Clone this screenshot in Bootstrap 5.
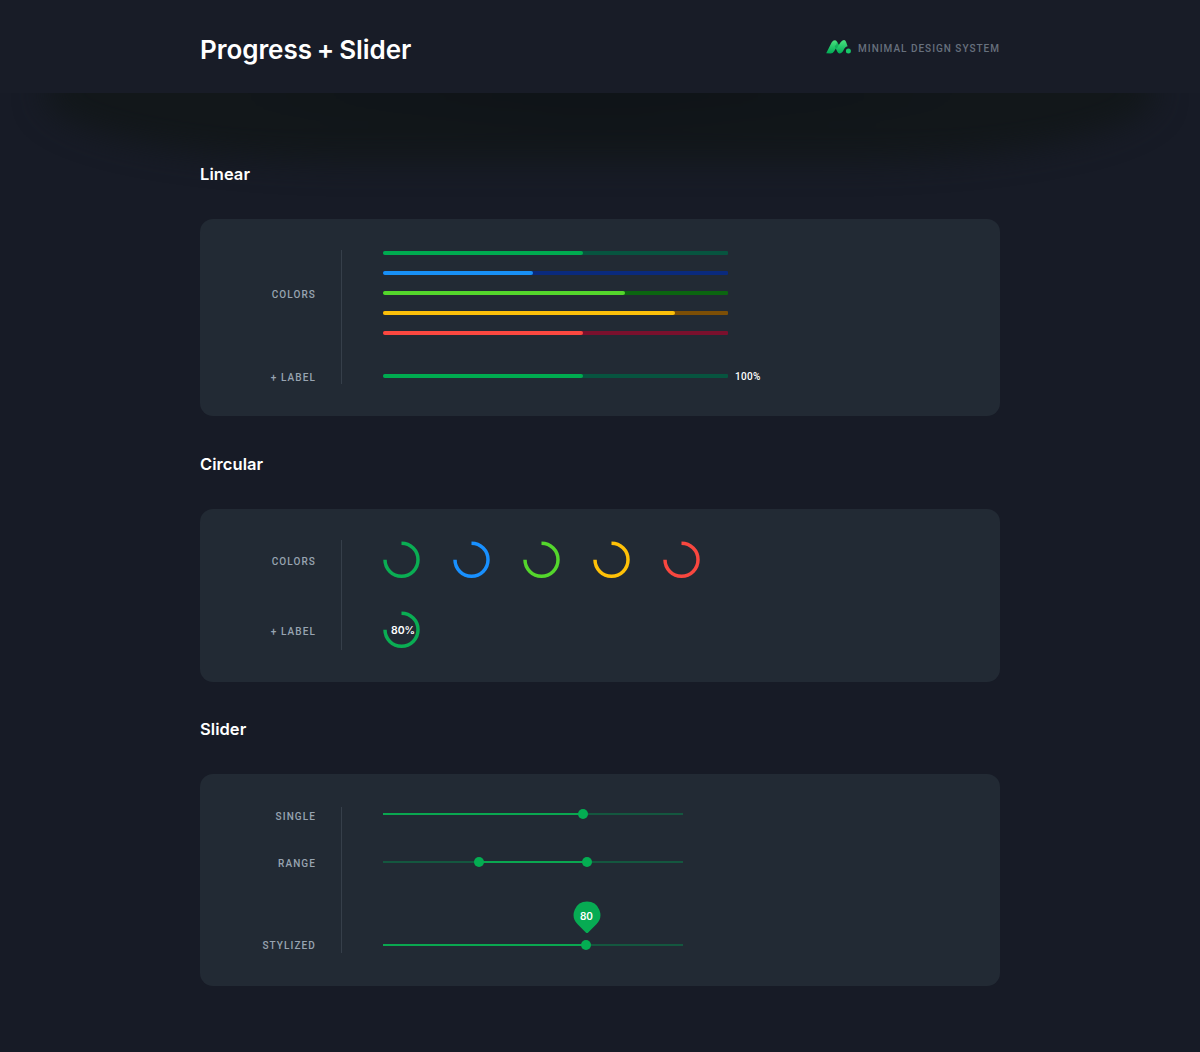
<!DOCTYPE html>
<html lang="en" data-bs-theme="dark">
<head>
<meta charset="utf-8">
<meta name="viewport" content="width=device-width, initial-scale=1">
<title>Progress + Slider</title>
<link href="https://cdn.jsdelivr.net/npm/bootstrap@5.3.0/dist/css/bootstrap.min.css" rel="stylesheet">
<style>
  body { background: #171b26; color: #fff; font-family: Inter, Roboto, sans-serif; min-height: 1052px; }
  .wrap { width: 800px; margin: 0 auto; }
  .top-bar { height: 93px; background: #181c27; padding-top: 8px; }
  .page-title { font: 600 26px/32px Inter, sans-serif; letter-spacing: -.05px; word-spacing: -1.6px; margin: 0; position: relative; top: -1px; }
  .brand { gap: 7px; margin-bottom: 7px; }
  .brand-name { font: 500 10px/12px Roboto, sans-serif; letter-spacing: 1px; color: #67707d; margin-top: 4px; white-space: nowrap; }
  .page-main { padding-top: 69px; position: relative; overflow: hidden; }
  .page-main::before { content: ""; position: absolute; left: 44px; right: 44px; top: -68px; height: 136px; border-radius: 320px / 68px; background: radial-gradient(ellipse 400px 50px at 50% 50%, #0f1317 0, #101519 60%, #12171a 100%); filter: blur(15px); }
  .page-main > .wrap { position: relative; }
  .section-title { font: 600 16.5px/24px Inter, sans-serif; letter-spacing: .05px; margin: 0 0 33px; }
  .panel { background: #222a34; border-radius: 13px; margin-bottom: 35px; padding: 31px 0 32px; }
  .s-bars { margin-bottom: 36px; }
  .labels { width: 116px; }
  .row-label { font: 500 10px/12px Roboto, sans-serif; letter-spacing: 1.1px; color: #98a4b1; text-align: right; }
  .rule { width: 1px; background: #363f4a; margin: 0 41px 0 25px; }
  .h-90 { height: 90px; }
  .bars { gap: 16px; height: 90px; padding-top: 1px; }
  .progress { --bs-progress-height: 4px; width: 345px; border-radius: 1px; }
  .progress-bar { border-radius: 2px; }
  .t-green { background: #07543f; } .f-green { background: #00ab50; }
  .t-blue { background: #0a2a7d; } .f-blue { background: #1890f5; }
  .t-lime { background: #0b6510; } .f-lime { background: #54d62c; }
  .t-amber { background: #7c4e06; } .f-amber { background: #fbbf0a; }
  .t-red { background: #7a102d; } .f-red { background: #fb4840; }
  .bar-row { height: 12px; margin-top: 30px; }
  .pct { font: 500 10px/12px Roboto, sans-serif; letter-spacing: .3px; margin-left: 7px; position: relative; top: 1px; }
  .ring { width: 37px; height: 37px; fill: none; stroke-width: 3.5; display: block; }
  .rings { gap: 33px; }
  .ring-label { font: 600 10.5px/12px Inter, sans-serif; left: 8px; top: 14px; letter-spacing: -.05px; }
  .track { width: 300px; height: 2px; background: #14573f; }
  .track-fill { height: 2px; background: #0aa750; }
  .thumb { width: 10px; height: 10px; border-radius: 50%; background: #04ad52; top: -4px; margin-left: -5px; }
  .pin { width: 28px; height: 33px; margin-left: -14px; top: -43px; }
  .pin-text { font: 600 10px/12px Inter, sans-serif; width: 28px; margin-left: -14px; top: -34px; text-align: center; }
  .s-sliders { padding: 33px 0 33px; }
</style>
</head>
<body>
<header class="top-bar">
  <div class="wrap h-100 d-flex align-items-center justify-content-between">
    <h1 class="page-title">Progress + Slider</h1>
    <div class="brand d-flex align-items-center">
      <svg width="25" height="14" viewBox="0 0 25 14">
        <defs><linearGradient id="leaf" x1="0" y1="0" x2="0" y2="1"><stop offset="0" stop-color="#4be27f"/><stop offset="1" stop-color="#00ab55"/></linearGradient></defs>
        <path d="M.2 13.2 5.6 2.6Q7 .1 9 .2 10.4.4 11.2 2L12.8 5 14.4 2.6Q16 .1 18 .1 19.4.2 20 1.8L21.6 6.2Q19.6 6.4 18.4 8.6L16.8 11.6Q15.6 13.6 13.6 13.4 12 13.2 11.2 11.4L9.8 8.4 8.2 11.2Q6.9 13.4 4.6 13.4Z" fill="url(#leaf)"/>
        <path d="M11.2 2 12.8 5 11 8.2 9.8 8.4 8.6 6Q10.6 5 11.2 2Z" fill="#00a451" opacity=".6"/>
        <circle cx="22.4" cy="11" r="2.5" fill="#17c869"/>
      </svg>
      <span class="brand-name">MINIMAL DESIGN SYSTEM</span>
    </div>
  </div>
</header>

<main class="page-main">
  <div class="wrap">
    <section>
      <h2 class="section-title">Linear</h2>
      <div class="panel s-bars d-flex">
        <div class="labels d-flex flex-column justify-content-between" style="height:134px">
          <div class="h-90 d-flex align-items-center justify-content-end"><span class="row-label">COLORS</span></div>
          <div class="row-label">+ LABEL</div>
        </div>
        <div class="rule"></div>
        <div>
          <div class="bars d-flex flex-column">
            <div class="progress t-green"><div class="progress-bar f-green" style="width:58%"></div></div>
            <div class="progress t-blue"><div class="progress-bar f-blue" style="width:43.6%"></div></div>
            <div class="progress t-lime"><div class="progress-bar f-lime" style="width:70.1%"></div></div>
            <div class="progress t-amber"><div class="progress-bar f-amber" style="width:84.7%"></div></div>
            <div class="progress t-red"><div class="progress-bar f-red" style="width:58%"></div></div>
          </div>
          <div class="bar-row d-flex align-items-center">
            <div class="progress t-green"><div class="progress-bar f-green" style="width:58%"></div></div>
            <span class="pct">100%</span>
          </div>
        </div>
      </div>
    </section>

    <section>
      <h2 class="section-title">Circular</h2>
      <div class="panel d-flex">
        <div class="labels d-flex flex-column" style="height:110px">
          <div class="row-label" style="padding-top:16px">COLORS</div>
          <div class="row-label" style="padding-top:58px">+ LABEL</div>
        </div>
        <div class="rule"></div>
        <div class="d-flex flex-column rings">
          <div class="d-flex rings" style="padding-top:1px">
            <svg class="ring" viewBox="0 0 37 37" stroke="#0aad53"><path d="M18.5 2.25A16.5 16.5 0 1 1 2 18.75"/></svg>
            <svg class="ring" viewBox="0 0 37 37" stroke="#1890ff"><path d="M18.5 2.25A16.5 16.5 0 1 1 2 18.75"/></svg>
            <svg class="ring" viewBox="0 0 37 37" stroke="#54d62c"><path d="M18.5 2.25A16.5 16.5 0 1 1 2 18.75"/></svg>
            <svg class="ring" viewBox="0 0 37 37" stroke="#ffc107"><path d="M18.5 2.25A16.5 16.5 0 1 1 2 18.75"/></svg>
            <svg class="ring" viewBox="0 0 37 37" stroke="#f8473f"><path d="M18.5 2.25A16.5 16.5 0 1 1 2 18.75"/></svg>
          </div>
          <div class="position-relative">
            <svg class="ring" viewBox="0 0 37 37" stroke="#0aad53"><path d="M18.5 2.25A16.5 16.5 0 1 1 2 18.75"/></svg>
            <span class="ring-label position-absolute">80%</span>
          </div>
        </div>
      </div>
    </section>

    <section>
      <h2 class="section-title">Slider</h2>
      <div class="panel s-sliders mb-0 d-flex">
        <div class="labels d-flex flex-column" style="height:146px">
          <div class="row-label" style="padding-top:4px">SINGLE</div>
          <div class="row-label" style="padding-top:35px">RANGE</div>
          <div class="row-label" style="padding-top:70px">STYLIZED</div>
        </div>
        <div class="rule"></div>
        <div class="d-flex flex-column">
          <div class="track position-relative" style="margin-top:6px">
            <div class="track-fill" style="width:66.7%"></div>
            <span class="thumb position-absolute" style="left:66.7%"></span>
          </div>
          <div class="track position-relative" style="margin-top:46px">
            <div class="track-fill" style="margin-left:32%;width:36%"></div>
            <span class="thumb position-absolute" style="left:32%"></span>
            <span class="thumb position-absolute" style="left:68%"></span>
          </div>
          <div class="track position-relative" style="margin-top:81px">
            <div class="track-fill" style="width:67.8%"></div>
            <span class="thumb position-absolute" style="left:67.8%"></span>
            <svg class="pin position-absolute" style="left:68%" viewBox="0 0 28 33"><path d="M14 .5A13.3 13.3 0 0 1 23.4 23.2L15.2 31.4Q14 32.6 12.8 31.4L4.6 23.2A13.3 13.3 0 0 1 14 .5Z" fill="#07ab53"/></svg>
            <span class="pin-text position-absolute" style="left:67.8%">80</span>
          </div>
        </div>
      </div>
    </section>
  </div>
</main>
<script src="https://cdn.jsdelivr.net/npm/bootstrap@5.3.0/dist/js/bootstrap.bundle.min.js"></script>
</body>
</html>
